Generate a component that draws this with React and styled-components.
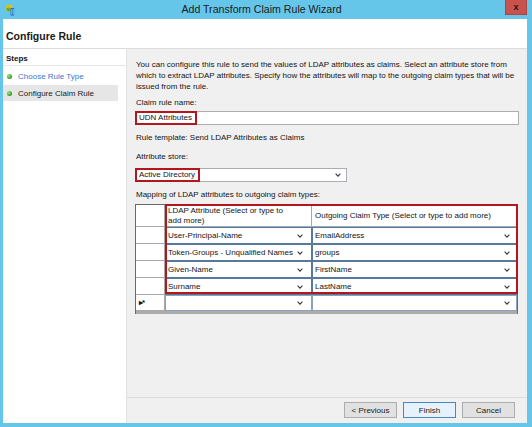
import React from "react";
import styled, { createGlobalStyle } from "styled-components";

const GlobalStyle = createGlobalStyle`
  html, body { margin: 0; padding: 0; }
  body {
    width: 532px;
    height: 427px;
    overflow: hidden;
    font-family: "Liberation Sans", Arial, sans-serif;
    color: #141414;
  }
`;

const Window = styled.div`
  width: 532px;
  height: 427px;
  background: #65c6ea;
  display: flex;
  flex-direction: column;
  box-sizing: border-box;
`;

const TitleBar = styled.div`
  height: 19px;
  display: flex;
  align-items: flex-start;
  flex-shrink: 0;
`;

const IconBox = styled.div`
  width: 18px;
  height: 19px;
  box-sizing: border-box;
  padding: 2px 0 0 5px;
`;

const Title = styled.div`
  flex: 1;
  text-align: center;
  font-size: 10.6px;
  line-height: 19px;
  color: #202020;
`;

const CloseButton = styled.div`
  width: 22px;
  height: 15px;
  margin-right: 5px;
  box-sizing: border-box;
  background: #c9524e;
  border: 1px solid #b04440;
  border-top: none;
  display: flex;
  align-items: center;
  justify-content: center;
  font-size: 9px;
  font-weight: bold;
  color: #1b1b1b;
`;

const Frame = styled.div`
  flex: 1;
  min-height: 0;
  margin: 0 5px 4px 3px;
  display: flex;
  flex-direction: column;
  background: #ffffff;
`;

const Header = styled.div`
  height: 30px;
  box-sizing: border-box;
  padding: 4px 0 0 3px;
  border-bottom: 1px solid #dcdcdc;
  display: flex;
  align-items: center;
  flex-shrink: 0;
`;

const HeaderTitle = styled.div`
  font-size: 10.5px;
  font-weight: bold;
  color: #1a1a1a;
`;

const Main = styled.div`
  flex: 1;
  min-height: 0;
  display: flex;
`;

const Sidebar = styled.div`
  width: 123px;
  border-right: 1px solid #e2e2e2;
  padding-top: 4px;
  background: #ffffff;
`;

const StepsTitle = styled.div`
  font-size: 8px;
  font-weight: bold;
  line-height: 11px;
  padding: 0 0 1px 3px;
  border-bottom: 1px solid #e6e6e6;
`;

const StepList = styled.div`
  padding-top: 2px;
  display: flex;
  flex-direction: column;
  gap: 1px;
`;

const StepItem = styled.div`
  height: 16px;
  margin-right: 8px;
  padding-left: 4px;
  display: flex;
  align-items: center;
  font-size: 8px;
  background: ${(p) => (p.$active ? "#e6e6e6" : "transparent")};
  color: ${(p) => (p.$link ? "#3a76d6" : "#1a1a1a")};
`;

const Dot = styled.span`
  width: 5px;
  height: 5px;
  border-radius: 50%;
  margin-right: 6px;
  background: radial-gradient(circle at 35% 35%, #9be889, #2f9a22 70%);
`;

const Panel = styled.div`
  flex: 1;
  min-width: 0;
  background: #f0f0f0;
  padding: 10px 8px 0 9px;
  display: flex;
  flex-direction: column;
  font-size: 8px;
  line-height: 11px;
  color: #141414;
`;

const Description = styled.p`
  margin: 0;
  white-space: nowrap;
`;

const Label = styled.div`
  margin-top: ${(p) => p.$gap}px;
  white-space: nowrap;
`;

const TextBox = styled.div`
  margin: 3px 0 0 -1px;
  height: 14px;
  box-sizing: border-box;
  background: #ffffff;
  border: 1px solid #abadb3;
  display: flex;
  align-items: stretch;
`;

const SelectBox = styled.div`
  margin: 6px 0 0 -1px;
  width: 212px;
  height: 14px;
  box-sizing: border-box;
  background: #ffffff;
  border: 1px solid #abadb3;
  display: flex;
  align-items: stretch;
  justify-content: space-between;
`;

const Marked = styled.span`
  margin: -1px 0 -1px -1px;
  padding: 0 3px 0 2px;
  border: 2px solid #b3161d;
  display: inline-flex;
  align-items: center;
  line-height: 10px;
`;

const ChevronBox = styled.span`
  display: flex;
  align-items: center;
  padding-right: ${(p) => p.$pad || 6}px;
`;

const TableWrap = styled.div`
  position: relative;
  margin: 4px 0 0 -1px;
  width: 383px;
  box-sizing: border-box;
  border: 1px solid #6a6a6a;
  border-bottom: none;
  background: #ababab;
  padding-bottom: 3px;
`;

const Grid = styled.div`
  display: grid;
  grid-template-columns: 29px 147px 1fr;
  grid-template-rows: 22px repeat(4, 17px) 16px;
`;

const Corner = styled.div`
  background: #ffffff;
  border-right: 1px solid #a8a8a8;
  border-bottom: 1px solid #a8a8a8;
`;

const ColumnHeader = styled.div`
  background: #ffffff;
  padding: 0 ${(p) => p.$padRight || 3}px 0 3px;
  display: flex;
  align-items: center;
  line-height: 10px;
  border-right: 1px solid #a8a8a8;
  border-bottom: 1px solid #a8a8a8;
`;

const RowHeader = styled.div`
  background: #ffffff;
  border-right: 1px solid #a8a8a8;
  border-bottom: 1px solid #a8a8a8;
  display: flex;
  align-items: center;
  padding-left: 3px;
  font-size: 8px;
  font-weight: bold;
  letter-spacing: -1px;
`;

const Combo = styled.div`
  background: #ffffff;
  box-sizing: border-box;
  border: 1px solid ${(p) => (p.$fresh ? "#8aa3bd" : "#56799c")};
  display: flex;
  align-items: center;
  justify-content: space-between;
  padding-left: 2px;
  white-space: nowrap;
  overflow: hidden;
`;

const RedFrame = styled.div`
  position: absolute;
  left: 29px;
  top: -1px;
  right: -1px;
  height: 90px;
  box-sizing: border-box;
  border: 2px solid #b3161d;
  pointer-events: none;
`;

const Footer = styled.div`
  margin: auto -8px 0 -9px;
  border-top: 1px solid #dcdcdc;
  padding: 4px 12px 5px 0;
  display: flex;
  justify-content: flex-end;
  gap: 6px;
`;

const Button = styled.div`
  width: 53px;
  height: 16px;
  box-sizing: border-box;
  display: flex;
  align-items: center;
  justify-content: center;
  font-size: 8px;
  background: ${(p) => (p.$primary ? "#e5f1fb" : "#e1e1e1")};
  border: 1px solid ${(p) => (p.$primary ? "#4a86c0" : "#adadad")};
  color: #1a1a1a;
`;

const Chevron = () => (
  <svg width="6" height="4" viewBox="0 0 6 4">
    <polyline points="0.6,0.6 3,3.2 5.4,0.6" fill="none" stroke="#3a3a3a" strokeWidth="1.1" />
  </svg>
);

const AppIcon = () => (
  <svg width="10" height="12" viewBox="0 0 10 12">
    <circle cx="4" cy="4" r="3.6" fill="#cfc21c" />
    <path d="M1 4.5 A3 3 0 0 0 6 6.5 L4 3.5 Z" fill="#5fae3a" />
    <rect x="5.5" y="4" width="3.6" height="7.5" fill="#2b6dbd" />
    <rect x="6.3" y="5" width="0.9" height="5.5" fill="#8cc8f0" />
    <rect x="7.8" y="5" width="0.9" height="5.5" fill="#8cc8f0" />
  </svg>
);

const rows = [
  ["User-Principal-Name", "EmailAddress"],
  ["Token-Groups - Unqualified Names", "groups"],
  ["Given-Name", "FirstName"],
  ["Surname", "LastName"],
];

export default function App() {
  return (
    <>
      <GlobalStyle />
      <Window>
        <TitleBar>
          <IconBox>
            <AppIcon />
          </IconBox>
          <Title>Add Transform Claim Rule Wizard</Title>
          <CloseButton>x</CloseButton>
        </TitleBar>
        <Frame>
          <Header>
            <HeaderTitle>Configure Rule</HeaderTitle>
          </Header>
          <Main>
            <Sidebar>
              <StepsTitle>Steps</StepsTitle>
              <StepList>
                <StepItem $link>
                  <Dot />
                  Choose Rule Type
                </StepItem>
                <StepItem $active>
                  <Dot />
                  Configure Claim Rule
                </StepItem>
              </StepList>
            </Sidebar>
            <Panel>
              <Description>
                You can configure this rule to send the values of LDAP attributes as claims. Select an attribute store from
                <br />
                which to extract LDAP attributes. Specify how the attributes will map to the outgoing claim types that will be
                <br />
                issued from the rule.
              </Description>
              <Label $gap={5}>Claim rule name:</Label>
              <TextBox>
                <Marked>UDN Attributes</Marked>
              </TextBox>
              <Label $gap={7}>Rule template: Send LDAP Attributes as Claims</Label>
              <Label $gap={8}>Attribute store:</Label>
              <SelectBox>
                <Marked>Active Directory</Marked>
                <ChevronBox $pad={5}>
                  <Chevron />
                </ChevronBox>
              </SelectBox>
              <Label $gap={7}>Mapping of LDAP attributes to outgoing claim types:</Label>
              <TableWrap>
                <Grid>
                  <Corner />
                  <ColumnHeader $padRight={14}>LDAP Attribute (Select or type to add more)</ColumnHeader>
                  <ColumnHeader>Outgoing Claim Type (Select or type to add more)</ColumnHeader>
                  {rows.map(([attr, claim]) => (
                    <React.Fragment key={attr}>
                      <RowHeader />
                      <Combo>
                        {attr}
                        <ChevronBox $pad={8}>
                          <Chevron />
                        </ChevronBox>
                      </Combo>
                      <Combo>
                        {claim}
                        <ChevronBox>
                          <Chevron />
                        </ChevronBox>
                      </Combo>
                    </React.Fragment>
                  ))}
                  <RowHeader>▸*</RowHeader>
                  <Combo $fresh>
                    <span />
                    <ChevronBox $pad={8}>
                      <Chevron />
                    </ChevronBox>
                  </Combo>
                  <Combo $fresh>
                    <span />
                    <ChevronBox>
                      <Chevron />
                    </ChevronBox>
                  </Combo>
                </Grid>
                <RedFrame />
              </TableWrap>
              <Footer>
                <Button>&lt; Previous</Button>
                <Button $primary>Finish</Button>
                <Button>Cancel</Button>
              </Footer>
            </Panel>
          </Main>
        </Frame>
      </Window>
    </>
  );
}
